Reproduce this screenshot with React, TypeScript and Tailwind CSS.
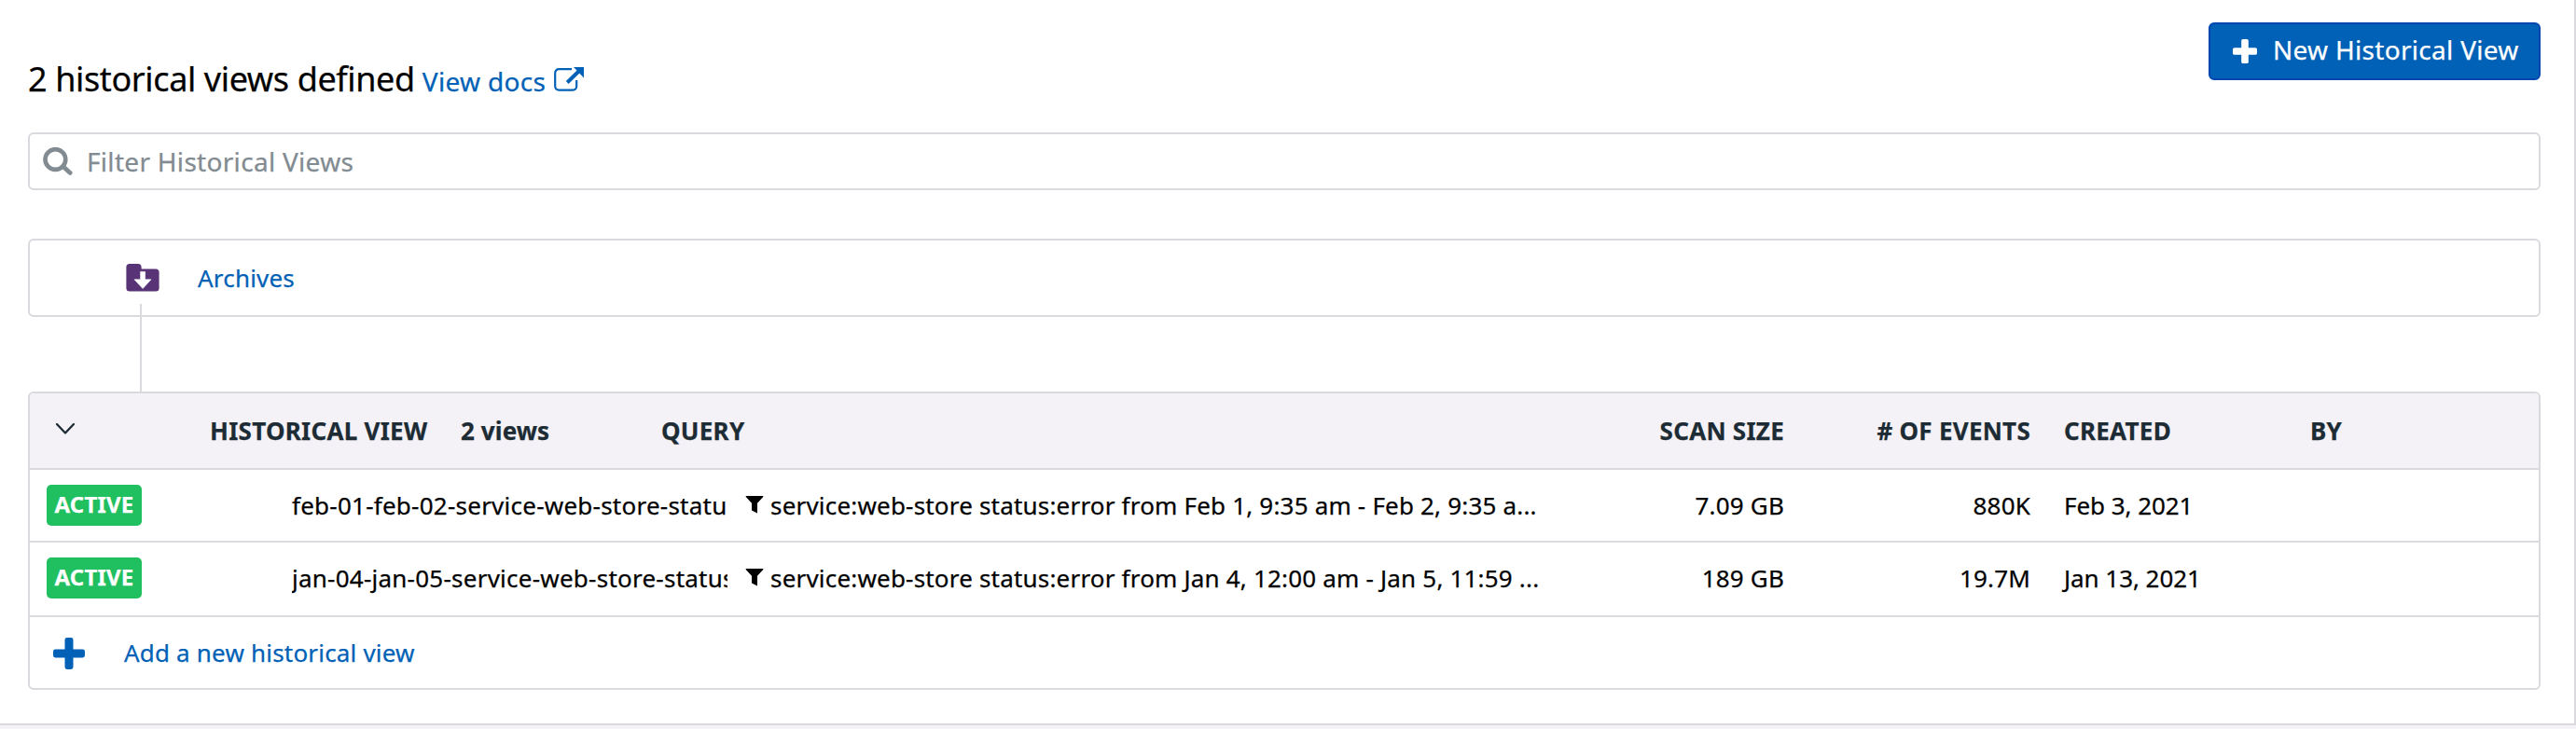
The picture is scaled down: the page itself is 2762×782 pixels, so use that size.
import React from "react";

type View = { name: string; query: string; size: string; events: string; created: string };

const views: View[] = [
  {
    name: "feb-01-feb-02-service-web-store-status-error",
    query: "service:web-store status:error from Feb 1, 9:35 am - Feb 2, 9:35 a...",
    size: "7.09 GB",
    events: "880K",
    created: "Feb 3, 2021",
  },
  {
    name: "jan-04-jan-05-service-web-store-status-error",
    query: "service:web-store status:error from Jan 4, 12:00 am - Jan 5, 11:59 ...",
    size: "189 GB",
    events: "19.7M",
    created: "Jan 13, 2021",
  },
];

function PlusIcon({ className, bar }: { className: string; bar: number }) {
  const start = (34 - bar) / 2;
  return (
    <svg viewBox="0 0 34 34" className={className} fill="currentColor" aria-hidden="true">
      <rect x={start} y="0" width={bar} height="34" rx="2.4" />
      <rect x="0" y={start} width="34" height={bar} rx="2.4" />
    </svg>
  );
}

function ExternalLinkIcon() {
  return (
    <svg viewBox="0 0 32 27" className="mb-[5px] h-[27px] w-8" fill="none" stroke="currentColor" aria-hidden="true">
      <path d="M19 3.2H5.2a4 4 0 0 0-4 4v14.4a4 4 0 0 0 4 4h15a4 4 0 0 0 4-4V15" strokeWidth="2.2" />
      <path d="M14.2 17.5 27 5" strokeWidth="4" />
      <path d="M21 1h11v11.5z" fill="currentColor" stroke="none" />
    </svg>
  );
}

function SearchIcon() {
  return (
    <svg viewBox="0 0 32 30" className="h-[30px] w-8 shrink-0" fill="none" stroke="#828b91" aria-hidden="true">
      <circle cx="13.4" cy="13" r="10.9" strokeWidth="4.6" />
      <path d="m21.6 20.4 7.6 7" strokeWidth="4.8" strokeLinecap="round" />
    </svg>
  );
}

function ArchiveIcon() {
  return (
    <svg viewBox="0 0 36 30" className="h-[30px] w-9 shrink-0" aria-hidden="true">
      <path d="M4 0h9a3.6 3.6 0 0 1 3.6 3.6V5.4H32a3.6 3.6 0 0 1 3.6 3.6v17a3.6 3.6 0 0 1-3.6 3.6H4A3.6 3.6 0 0 1 .4 26V3.6A3.6 3.6 0 0 1 4 0z" fill="#583375" />
      <path d="M15.6 8.4h5v8.4H27L18.1 26.6 9 16.8h6.6z" fill="#fff" stroke="#fff" strokeWidth=".6" strokeLinejoin="round" />
    </svg>
  );
}

function ChevronIcon() {
  return (
    <svg viewBox="0 0 22 14" className="h-[14px] w-[22px]" fill="none" stroke="#1c2b34" strokeWidth="2.3" strokeLinecap="round" strokeLinejoin="round" aria-hidden="true">
      <path d="m2 2 9 9.5L20 2" />
    </svg>
  );
}

function FunnelIcon() {
  return (
    <svg viewBox="0 0 20 20" className="mb-0.5 h-5 w-5 shrink-0" aria-hidden="true">
      <path d="M.7 1h18.6v1L13 8.8V19.4L7 16.6V8.8L.7 2z" fill="#000" />
    </svg>
  );
}

function Row({ view }: { view: View }) {
  return (
    <>
      <div className="w-[281px] shrink-0 pl-[18px]">
        <span className="flex h-11 w-[102px] items-center justify-center rounded-[5px] bg-[#20bf5f] pb-0.5 text-2xl font-bold text-white">
          ACTIVE
        </span>
      </div>
      <div className="w-[467px] shrink-0 overflow-hidden whitespace-nowrap tracking-[0.24px]">{view.name}</div>
      <div className="flex w-[902px] shrink-0 items-center gap-[7px] whitespace-nowrap pl-[19px]">
        <FunnelIcon />
        <span>{view.query}</span>
      </div>
      <div className="w-[231px] shrink-0 text-right">{view.size}</div>
      <div className="w-[264px] shrink-0 text-right">{view.events}</div>
      <div className="shrink-0 pl-9 tracking-[-0.05px]">{view.created}</div>
    </>
  );
}

export default function App() {
  return (
    <div className="flex h-[782px] w-[2762px] flex-col bg-[#f4f2f6] font-['Noto_Sans',sans-serif] text-[26px] leading-9 tracking-[0.19px] text-black [-webkit-text-stroke:0.25px]">
      <main className="h-[778px] border-b-2 border-r-2 border-[#d9d9de] bg-white pl-[30px] pr-9 pt-6">
        <header className="flex h-[118px] items-start justify-between">
          <div className="flex items-baseline pt-[37px]">
            <h1 className="text-[36px] leading-[48px] tracking-[-0.38px]">2 historical views defined</h1>
            <a className="ml-2 flex items-center gap-[9px] text-[28px] tracking-[0.33px] text-[#0061b6]">
              View docs
              <ExternalLinkIcon />
            </a>
          </div>
          <button className="flex h-[62px] w-[356px] items-center rounded-md border-2 border-[#0046b0] bg-[#0061b6] pl-6 text-[28px] tracking-[0.3px] text-white">
            <PlusIcon className="h-[26px] w-[26px]" bar={10} />
            <span className="ml-[17px] pb-1">New Historical View</span>
          </button>
        </header>

        <div className="flex h-[62px] items-center rounded-md border-2 border-[#d9d9de] pl-3.5 text-[28px] tracking-[0.3px] text-[#828b91]">
          <SearchIcon />
          <span className="ml-[15px]">Filter Historical Views</span>
        </div>

        <section className="relative mt-[52px] flex h-[84px] items-center rounded-md border-2 border-[#d9d9de] pl-[103px]">
          <ArchiveIcon />
          <a className="ml-[41px] text-[#0061b6]">Archives</a>
          <div className="absolute left-[118px] top-[68px] h-[94px] w-0.5 bg-[#d9d9de]" />
        </section>

        <section className="mt-20 overflow-hidden rounded-md border-2 border-[#d9d9de]">
          <div className="flex h-[82px] items-center border-b-2 border-[#d9d9de] bg-[#f4f2f6] font-bold tracking-[0.27px] text-[#1c2b34]">
            <div className="w-[193px] pb-1 pl-[27px]">
              <ChevronIcon />
            </div>
            <div className="w-[269px]">HISTORICAL VIEW</div>
            <div className="w-[215px] tracking-[0.1px]">2 views</div>
            <div className="w-[973px]">QUERY</div>
            <div className="w-[231px] text-right">SCAN SIZE</div>
            <div className="w-[264px] text-right"># OF EVENTS</div>
            <div className="w-[266px] pl-9">CREATED</div>
            <div className="pl-[34px]">BY</div>
          </div>
          <div className="flex h-[78px] items-center border-b-2 border-[#d9d9de]">
            <Row view={views[0]} />
          </div>
          <div className="flex h-20 items-center border-b-2 border-[#d9d9de] pb-0.5">
            <Row view={views[1]} />
          </div>
          <div className="flex h-[76px] items-center pl-[25px] text-[#0061b6]">
            <PlusIcon className="mt-0.5 h-[34px] w-[34px]" bar={9} />
            <a className="ml-[42px]">Add a new historical view</a>
          </div>
        </section>
      </main>
    </div>
  );
}
